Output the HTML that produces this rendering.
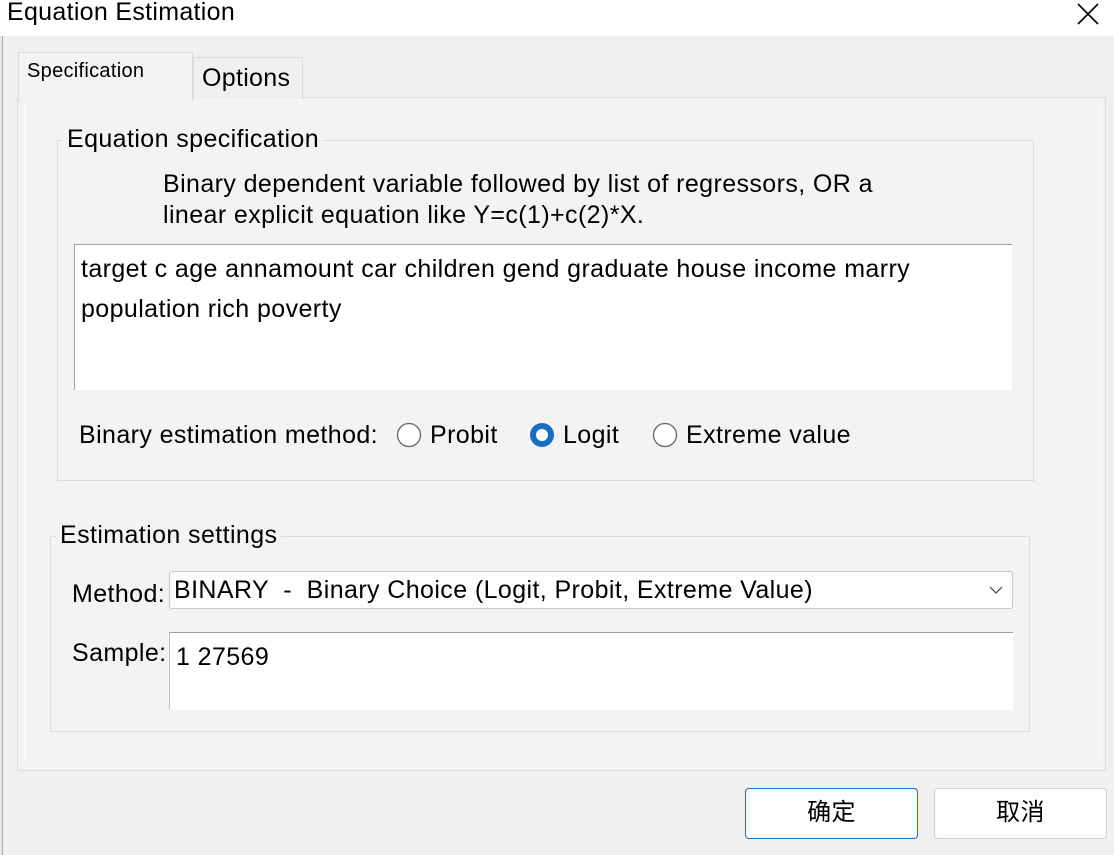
<!DOCTYPE html>
<html><head><meta charset="utf-8"><style>
*{box-sizing:border-box;margin:0;padding:0}
body{width:1114px;height:855px;background:#f0f0f0;position:relative;overflow:hidden;font-family:"Liberation Sans","Noto Sans CJK SC",sans-serif;color:#000}
.a{position:absolute}
.t{font-size:25px;letter-spacing:0.4px;white-space:nowrap;line-height:1}
</style></head><body>
<div class="a" style="left:0;top:0;width:1114px;height:36px;background:#fff"></div>
<div class="a t" style="left:7px;top:0px;font-size:25px;letter-spacing:0.3px">Equation Estimation</div>
<svg class="a" style="left:1077px;top:3px" width="22" height="22"><path d="M1 1L21 21M21 1L1 21" stroke="#000" stroke-width="1.6"/></svg>
<div class="a" style="left:0;top:36px;width:3px;height:819px;background:#e8e8e8;border-right:1px solid #aaa"></div>
<div class="a" style="left:17px;top:97px;width:1089px;height:674px;background:#f3f3f3;border:1px solid #dcdcdc"></div>
<div class="a" style="left:24px;top:100px;width:1076px;height:664px;background:#f3f3f3;border:1px solid #f9f9f9"></div>
<div class="a" style="left:193px;top:57px;width:110px;height:42px;background:#f0f0f0;border:1px solid #dcdcdc;border-bottom:none"></div>
<div class="a t" style="left:202px;top:66px;letter-spacing:0.3px">Options</div>
<div class="a" style="left:18px;top:52px;width:175px;height:50px;background:#f3f3f3;border:1px solid #dcdcdc;border-bottom:none"></div>
<div class="a t" style="left:27px;top:61px;font-size:20px;letter-spacing:0.3px">Specification</div>
<div class="a" style="left:57px;top:140px;width:977px;height:341px;border:1px solid #dcdcdc"></div>
<div class="a t" style="left:63px;top:127px;background:#f3f3f3;padding:0 4px">Equation specification</div>
<div class="a t" style="left:163px;top:172px">Binary dependent variable followed by list of regressors, OR a</div>
<div class="a t" style="left:163px;top:203px">linear explicit equation like Y=c(1)+c(2)*X.</div>
<div class="a" style="left:74px;top:244px;width:938px;height:146px;background:#fff;border-left:1px solid #a0a0a0;border-top:1px solid #a0a0a0"></div>
<div class="a t" style="left:81px;top:257px">target c age annamount car children gend graduate house income marry</div>
<div class="a t" style="left:81px;top:297px">population rich poverty</div>
<div class="a t" style="left:79px;top:423px">Binary estimation method:</div>
<svg class="a" style="left:396px;top:422px" width="26" height="26"><circle cx="13" cy="13" r="11.5" fill="#fff" stroke="#666" stroke-width="1.3"/></svg>
<div class="a t" style="left:430px;top:423px">Probit</div>
<svg class="a" style="left:529px;top:422px" width="26" height="26"><circle cx="13" cy="13" r="9" fill="#fff" stroke="#1a6dc0" stroke-width="6"/></svg>
<div class="a t" style="left:563px;top:423px">Logit</div>
<svg class="a" style="left:652px;top:422px" width="26" height="26"><circle cx="13" cy="13" r="11.5" fill="#fff" stroke="#666" stroke-width="1.3"/></svg>
<div class="a t" style="left:686px;top:423px">Extreme value</div>
<div class="a" style="left:50px;top:536px;width:980px;height:196px;border:1px solid #dcdcdc"></div>
<div class="a t" style="left:56px;top:523px;background:#f3f3f3;padding:0 4px">Estimation settings</div>
<div class="a" style="left:169px;top:571px;width:844px;height:38px;background:#fdfdfd;border:1px solid #c8c8c8;border-radius:3px"></div>
<div class="a t" style="left:72px;top:582px">Method:</div>
<div class="a t" style="left:174px;top:578px">BINARY &nbsp;- &nbsp;Binary Choice (Logit, Probit, Extreme Value)</div>
<svg class="a" style="left:989px;top:585px" width="14" height="10"><path d="M1 2L7 8L13 2" fill="none" stroke="#444" stroke-width="1.2"/></svg>
<div class="a t" style="left:72px;top:641px">Sample:</div>
<div class="a" style="left:169px;top:632px;width:844px;height:78px;background:#fff;border-top:1px solid #a0a0a0;border-left:1px solid #c0c0c0"></div>
<div class="a t" style="left:176px;top:645px">1 27569</div>
<div class="a" style="left:745px;top:788px;width:173px;height:51px;background:#fdfdfd;border:1px solid #1a6dc0;border-radius:4px"></div>
<div class="a t" style="left:745px;top:801px;width:173px;text-align:center;font-size:24px">确定</div>
<div class="a" style="left:934px;top:788px;width:173px;height:51px;background:#fdfdfd;border:1px solid #d0d0d0;border-radius:4px"></div>
<div class="a t" style="left:934px;top:801px;width:173px;text-align:center;font-size:24px">取消</div>
</body></html>
